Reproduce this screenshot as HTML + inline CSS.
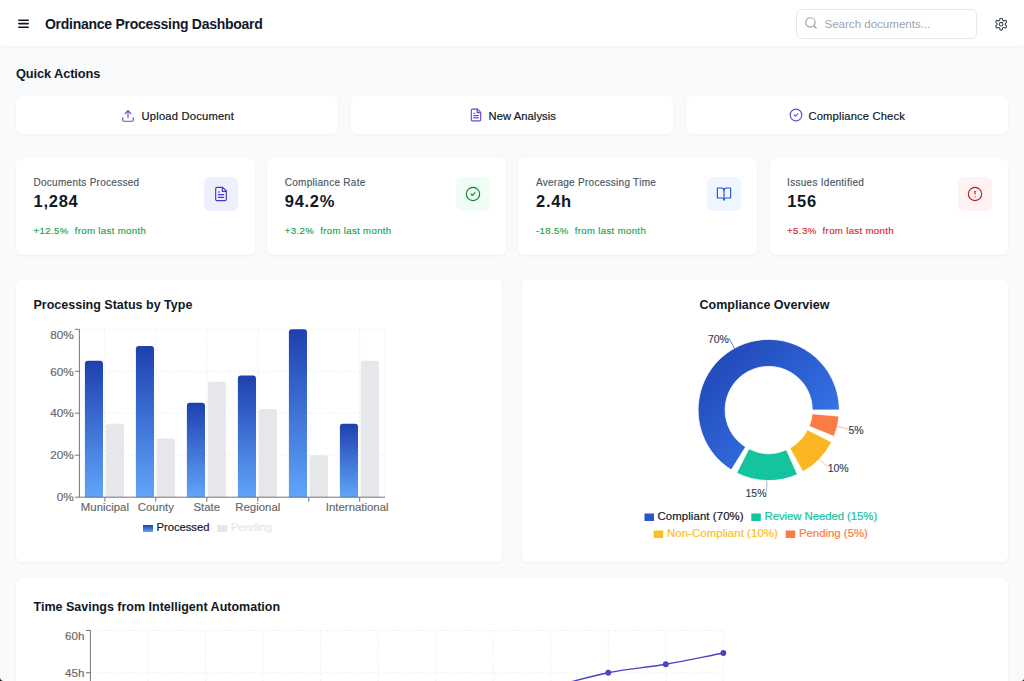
<!DOCTYPE html>
<html>
<head>
<meta charset="utf-8">
<style>
* { box-sizing: border-box; margin: 0; padding: 0; }
html, body { width: 1024px; height: 681px; overflow: hidden; }
body { background: #f9fafb; font-family: "Liberation Sans", sans-serif; color: #111827; position: relative; }
.abs { position: absolute; }
.t { position: absolute; white-space: nowrap; line-height: 1; }
.header { position: absolute; left: 0; top: 0; width: 1024px; height: 46px; background: #fff; box-shadow: 0 1px 2px rgba(0,0,0,0.05); }
.card { position: absolute; background: #fff; border-radius: 6px; box-shadow: 0 1px 3px rgba(0,0,0,0.05), 0 0 1px rgba(0,0,0,0.03); }
svg { position: absolute; overflow: visible; }
.med { -webkit-text-stroke: 0.2px currentColor; }
.ic { fill: none; stroke-width: 2; stroke-linecap: round; stroke-linejoin: round; }
</style>
</head>
<body>
<div class="header">
  <svg style="left:0;top:0" width="40" height="40"><g stroke="#111827" stroke-width="1.6" stroke-linecap="round"><line x1="18.8" x2="28.2" y1="20.2" y2="20.2"/><line x1="18.8" x2="28.2" y1="23.6" y2="23.6"/><line x1="18.8" x2="28.2" y1="27.3" y2="27.3"/></g></svg>
  <div class="t" style="left:45px;top:16.5px;font-size:14px;font-weight:700;letter-spacing:-0.27px;color:#111827">Ordinance Processing Dashboard</div>
  <div class="abs" style="left:795.5px;top:9px;width:181px;height:29.5px;border:1px solid #e7e8eb;border-radius:6px;background:#fff"></div>
  <svg class="ic" style="left:804.2px;top:16.2px;stroke-width:1.9" width="14" height="14" viewBox="0 0 24 24" stroke="#9a9ea6"><circle cx="11" cy="11" r="8"/><path d="m21 21-4.3-4.3"/></svg>
  <div class="t" style="left:824.5px;top:18.2px;font-size:11.6px;letter-spacing:-0.03px;color:#9ca3af">Search documents...</div>
  <svg class="ic" style="left:994px;top:16.8px;stroke-width:1.8" width="14.3" height="14.3" viewBox="0 0 24 24" stroke="#374151"><path d="M12.22 2h-.44a2 2 0 0 0-2 2v.18a2 2 0 0 1-1 1.73l-.43.25a2 2 0 0 1-2 0l-.15-.08a2 2 0 0 0-2.73.73l-.22.38a2 2 0 0 0 .73 2.73l.15.1a2 2 0 0 1 1 1.72v.51a2 2 0 0 1-1 1.74l-.15.09a2 2 0 0 0-.73 2.73l.22.38a2 2 0 0 0 2.730.73l.15-.08a2 2 0 0 1 2 0l.43.25a2 2 0 0 1 1 1.73V20a2 2 0 0 0 2 2h.44a2 2 0 0 0 2-2v-.18a2 2 0 0 1 1-1.73l.43-.25a2 2 0 0 1 2 0l.15.08a2 2 0 0 0 2.73-.73l.22-.39a2 2 0 0 0-.73-2.73l-.15-.08a2 2 0 0 1-1-1.74v-.5a2 2 0 0 1 1-1.74l.15-.09a2 2 0 0 0 .73-2.73l-.22-.38a2 2 0 0 0-2.73-.73l-.15.08a2 2 0 0 1-2 0l-.43-.25a2 2 0 0 1-1-1.73V4a2 2 0 0 0-2-2z"/><circle cx="12" cy="12" r="3"/></svg>
</div>

<!-- Quick actions -->
<div class="t" style="left:16px;top:67.7px;font-size:12.8px;font-weight:700;letter-spacing:-0.1px">Quick Actions</div>

<div class="card" style="left:16px;top:96px;width:322px;height:38px"></div>
<div class="card" style="left:351px;top:96px;width:322px;height:38px"></div>
<div class="card" style="left:686px;top:96px;width:322px;height:38px"></div>

<svg class="ic" style="left:121.1px;top:108.6px" width="14" height="14" viewBox="0 0 24 24" stroke="#5b4fcf"><path d="M21 15v4a2 2 0 0 1-2 2H5a2 2 0 0 1-2-2v-4"/><polyline points="17 8 12 3 7 8"/><line x1="12" x2="12" y1="3" y2="15"/></svg>
<div class="t med" style="left:141.5px;top:110.7px;font-size:11.2px;letter-spacing:0.2px;color:#111827">Upload Document</div>

<svg class="ic" style="left:468.5px;top:108.3px" width="14" height="14" viewBox="0 0 24 24" stroke="#5b4fcf"><path d="M14.5 2H6a2 2 0 0 0-2 2v16a2 2 0 0 0 2 2h12a2 2 0 0 0 2-2V7.5L14.5 2z"/><polyline points="14 2 14 8 20 8"/><line x1="16" x2="8" y1="13" y2="13"/><line x1="16" x2="8" y1="17" y2="17"/><line x1="10" x2="8" y1="9" y2="9"/></svg>
<div class="t med" style="left:488.5px;top:110.7px;font-size:11.2px;letter-spacing:0.08px;color:#111827">New Analysis</div>

<svg class="ic" style="left:788.7px;top:108.3px" width="14" height="14" viewBox="0 0 24 24" stroke="#5b4fcf"><circle cx="12" cy="12" r="10"/><path d="m9 12 2 2 4-4"/></svg>
<div class="t med" style="left:808.5px;top:110.7px;font-size:11.2px;letter-spacing:0.16px;color:#111827">Compliance Check</div>

<!-- Stats -->
<div class="card" style="left:16px;top:158px;width:238.8px;height:97px"></div>
<div class="t" style="left:33.5px;top:178px;font-size:10px;letter-spacing:0.28px;color:#4b5563;-webkit-text-stroke:0.15px #4b5563">Documents Processed</div>
<div class="t" style="left:33.6px;top:193px;font-size:16.5px;font-weight:700;letter-spacing:0.7px;color:#111827">1,284</div>
<div class="t" style="left:33.5px;top:226px;font-size:9.6px;letter-spacing:0.4px;color:#16a34a;-webkit-text-stroke:0.15px #16a34a">+12.5%<span style="margin-left:6px;letter-spacing:0.35px">from last month</span></div>
<div class="abs" style="left:204.4px;top:176.5px;width:34px;height:34px;border-radius:6px;background:#eef0fe"></div>
<svg class="ic" style="left:213.4px;top:185.5px;stroke-width:1.7" width="16" height="16" viewBox="0 0 24 24" stroke="#4338ca"><path d="M14.5 2H6a2 2 0 0 0-2 2v16a2 2 0 0 0 2 2h12a2 2 0 0 0 2-2V7.5L14.5 2z"/><polyline points="14 2 14 8 20 8"/><line x1="16" x2="8" y1="13" y2="13"/><line x1="16" x2="8" y1="17" y2="17"/><line x1="10" x2="8" y1="9" y2="9"/></svg>
<div class="card" style="left:267.2px;top:158px;width:238.8px;height:97px"></div>
<div class="t" style="left:284.7px;top:178px;font-size:10px;letter-spacing:0.28px;color:#4b5563;-webkit-text-stroke:0.15px #4b5563">Compliance Rate</div>
<div class="t" style="left:284.8px;top:193px;font-size:16.5px;font-weight:700;letter-spacing:0.7px;color:#111827">94.2%</div>
<div class="t" style="left:284.7px;top:226px;font-size:9.6px;letter-spacing:0.4px;color:#16a34a;-webkit-text-stroke:0.15px #16a34a">+3.2%<span style="margin-left:6px;letter-spacing:0.35px">from last month</span></div>
<div class="abs" style="left:455.6px;top:176.5px;width:34px;height:34px;border-radius:6px;background:#effdf4"></div>
<svg class="ic" style="left:464.6px;top:185.5px;stroke-width:1.7" width="16" height="16" viewBox="0 0 24 24" stroke="#15803d"><circle cx="12" cy="12" r="10"/><path d="m9 12 2 2 4-4"/></svg>
<div class="card" style="left:518.4px;top:158px;width:238.8px;height:97px"></div>
<div class="t" style="left:535.9px;top:178px;font-size:10px;letter-spacing:0.28px;color:#4b5563;-webkit-text-stroke:0.15px #4b5563">Average Processing Time</div>
<div class="t" style="left:536.0px;top:193px;font-size:16.5px;font-weight:700;letter-spacing:0.7px;color:#111827">2.4h</div>
<div class="t" style="left:535.9px;top:226px;font-size:9.6px;letter-spacing:0.4px;color:#16a34a;-webkit-text-stroke:0.15px #16a34a">-18.5%<span style="margin-left:6px;letter-spacing:0.35px">from last month</span></div>
<div class="abs" style="left:706.8px;top:176.5px;width:34px;height:34px;border-radius:6px;background:#eff6ff"></div>
<svg class="ic" style="left:715.8px;top:185.5px;stroke-width:1.7" width="16" height="16" viewBox="0 0 24 24" stroke="#1d4ed8"><path d="M12 7v14"/><path d="M3 18a1 1 0 0 1-1-1V4a1 1 0 0 1 1-1h5a4 4 0 0 1 4 4 4 4 0 0 1 4-4h5a1 1 0 0 1 1 1v13a1 1 0 0 1-1 1h-6a3 3 0 0 0-3 3 3 3 0 0 0-3-3z"/></svg>
<div class="card" style="left:769.6px;top:158px;width:238.8px;height:97px"></div>
<div class="t" style="left:787.1px;top:178px;font-size:10px;letter-spacing:0.28px;color:#4b5563;-webkit-text-stroke:0.15px #4b5563">Issues Identified</div>
<div class="t" style="left:787.2px;top:193px;font-size:16.5px;font-weight:700;letter-spacing:0.7px;color:#111827">156</div>
<div class="t" style="left:787.1px;top:226px;font-size:9.6px;letter-spacing:0.4px;color:#dc2626;-webkit-text-stroke:0.15px #dc2626">+5.3%<span style="margin-left:6px;letter-spacing:0.35px">from last month</span></div>
<div class="abs" style="left:958.0px;top:176.5px;width:34px;height:34px;border-radius:6px;background:#fef2f2"></div>
<svg class="ic" style="left:967.0px;top:185.5px;stroke-width:1.7" width="16" height="16" viewBox="0 0 24 24" stroke="#b91c1c"><circle cx="12" cy="12" r="10"/><line x1="12" x2="12" y1="8" y2="12"/><line x1="12" x2="12.01" y1="16" y2="16"/></svg>

<!-- Charts -->
<div class="card" style="left:16px;top:278.5px;width:486.4px;height:283px"></div>
<div class="card" style="left:521.6px;top:278.5px;width:486.4px;height:283px"></div>
<div class="card" style="left:16px;top:578px;width:992px;height:200px"></div>
<div class="t" style="left:33.5px;top:298.5px;font-size:12.5px;font-weight:700;color:#111827">Processing Status by Type</div>
<div class="t" style="left:699.5px;top:298.5px;font-size:12.5px;font-weight:700;color:#111827">Compliance Overview</div>
<div class="t" style="left:33.5px;top:600.5px;font-size:12.5px;font-weight:700;color:#111827">Time Savings from Intelligent Automation</div>
<svg style="left:0;top:0" width="1024" height="681" viewBox="0 0 1024 681" font-family="Liberation Sans, sans-serif">
<defs><linearGradient id="gb" x1="0" y1="0" x2="0" y2="1"><stop offset="0" stop-color="#1e40af"/><stop offset="1" stop-color="#60a5fa"/></linearGradient><linearGradient id="gd" x1="0" y1="0" x2="1" y2="1"><stop offset="0" stop-color="#1e40af"/><stop offset="1" stop-color="#3b82f6"/></linearGradient></defs>
<line x1="79.4" x2="385.2" y1="455.2" y2="455.2" stroke="#ececec" stroke-dasharray="2.4 2.4" stroke-width="0.8"/>
<line x1="79.4" x2="385.2" y1="413.2" y2="413.2" stroke="#ececec" stroke-dasharray="2.4 2.4" stroke-width="0.8"/>
<line x1="79.4" x2="385.2" y1="371.3" y2="371.3" stroke="#ececec" stroke-dasharray="2.4 2.4" stroke-width="0.8"/>
<line x1="79.4" x2="385.2" y1="329.3" y2="329.3" stroke="#ececec" stroke-dasharray="2.4 2.4" stroke-width="0.8"/>
<line x1="104.9" x2="104.9" y1="329.3" y2="497.2" stroke="#ececec" stroke-dasharray="2.4 2.4" stroke-width="0.8"/>
<line x1="155.8" x2="155.8" y1="329.3" y2="497.2" stroke="#ececec" stroke-dasharray="2.4 2.4" stroke-width="0.8"/>
<line x1="206.8" x2="206.8" y1="329.3" y2="497.2" stroke="#ececec" stroke-dasharray="2.4 2.4" stroke-width="0.8"/>
<line x1="257.8" x2="257.8" y1="329.3" y2="497.2" stroke="#ececec" stroke-dasharray="2.4 2.4" stroke-width="0.8"/>
<line x1="308.8" x2="308.8" y1="329.3" y2="497.2" stroke="#ececec" stroke-dasharray="2.4 2.4" stroke-width="0.8"/>
<line x1="359.7" x2="359.7" y1="329.3" y2="497.2" stroke="#ececec" stroke-dasharray="2.4 2.4" stroke-width="0.8"/>
<line x1="385.2" x2="385.2" y1="329.3" y2="497.2" stroke="#ececec" stroke-dasharray="2.4 2.4" stroke-width="0.8"/>
<path d="M84.90,497.20 V363.78 Q84.90,360.78 87.90,360.78 H100.00 Q103.00,360.78 103.00,363.78 V497.20 Z" fill="url(#gb)"/>
<path d="M105.80,497.20 V426.74 Q105.80,423.74 108.80,423.74 H121.00 Q124.00,423.74 124.00,426.74 V497.20 Z" fill="#e5e7eb"/>
<path d="M135.90,497.20 V349.09 Q135.90,346.09 138.90,346.09 H151.00 Q154.00,346.09 154.00,349.09 V497.20 Z" fill="url(#gb)"/>
<path d="M156.80,497.20 V441.44 Q156.80,438.44 159.80,438.44 H172.00 Q175.00,438.44 175.00,441.44 V497.20 Z" fill="#e5e7eb"/>
<path d="M186.90,497.20 V405.76 Q186.90,402.76 189.90,402.76 H202.00 Q205.00,402.76 205.00,405.76 V497.20 Z" fill="url(#gb)"/>
<path d="M207.80,497.20 V384.77 Q207.80,381.77 210.80,381.77 H223.00 Q226.00,381.77 226.00,384.77 V497.20 Z" fill="#e5e7eb"/>
<path d="M237.90,497.20 V378.47 Q237.90,375.47 240.90,375.47 H253.00 Q256.00,375.47 256.00,378.47 V497.20 Z" fill="url(#gb)"/>
<path d="M258.80,497.20 V412.05 Q258.80,409.05 261.80,409.05 H274.00 Q277.00,409.05 277.00,412.05 V497.20 Z" fill="#e5e7eb"/>
<path d="M288.90,497.20 V332.30 Q288.90,329.30 291.90,329.30 H304.00 Q307.00,329.30 307.00,332.30 V497.20 Z" fill="url(#gb)"/>
<path d="M309.80,497.20 V458.23 Q309.80,455.23 312.80,455.23 H325.00 Q328.00,455.23 328.00,458.23 V497.20 Z" fill="#e5e7eb"/>
<path d="M339.90,497.20 V426.74 Q339.90,423.74 342.90,423.74 H355.00 Q358.00,423.74 358.00,426.74 V497.20 Z" fill="url(#gb)"/>
<path d="M360.80,497.20 V363.78 Q360.80,360.78 363.80,360.78 H376.00 Q379.00,360.78 379.00,363.78 V497.20 Z" fill="#e5e7eb"/>
<line x1="79.4" x2="79.4" y1="329.3" y2="497.2" stroke="#666" stroke-width="0.9"/>
<line x1="79.4" x2="385.2" y1="497.2" y2="497.2" stroke="#666" stroke-width="0.9"/>
<line x1="74.9" x2="79.4" y1="497.2" y2="497.2" stroke="#666" stroke-width="0.9"/>
<text x="73.8" y="501.4" text-anchor="end" font-size="11.8" fill="#666" stroke="#666" stroke-width="0.15">0%</text>
<line x1="74.9" x2="79.4" y1="455.2" y2="455.2" stroke="#666" stroke-width="0.9"/>
<text x="73.8" y="459.4" text-anchor="end" font-size="11.8" fill="#666" stroke="#666" stroke-width="0.15">20%</text>
<line x1="74.9" x2="79.4" y1="413.2" y2="413.2" stroke="#666" stroke-width="0.9"/>
<text x="73.8" y="417.4" text-anchor="end" font-size="11.8" fill="#666" stroke="#666" stroke-width="0.15">40%</text>
<line x1="74.9" x2="79.4" y1="371.3" y2="371.3" stroke="#666" stroke-width="0.9"/>
<text x="73.8" y="375.5" text-anchor="end" font-size="11.8" fill="#666" stroke="#666" stroke-width="0.15">60%</text>
<line x1="74.9" x2="79.4" y1="329.3" y2="329.3" stroke="#666" stroke-width="0.9"/>
<text x="73.8" y="338.5" text-anchor="end" font-size="11.8" fill="#666" stroke="#666" stroke-width="0.15">80%</text>
<line x1="104.9" x2="104.9" y1="497.2" y2="501.7" stroke="#666" stroke-width="0.9"/>
<text x="104.9" y="510.8" text-anchor="middle" font-size="11.4" fill="#666" stroke="#666" stroke-width="0.15">Municipal</text>
<line x1="155.8" x2="155.8" y1="497.2" y2="501.7" stroke="#666" stroke-width="0.9"/>
<text x="155.8" y="510.8" text-anchor="middle" font-size="11.4" fill="#666" stroke="#666" stroke-width="0.15">County</text>
<line x1="206.8" x2="206.8" y1="497.2" y2="501.7" stroke="#666" stroke-width="0.9"/>
<text x="206.8" y="510.8" text-anchor="middle" font-size="11.4" fill="#666" stroke="#666" stroke-width="0.15">State</text>
<line x1="257.8" x2="257.8" y1="497.2" y2="501.7" stroke="#666" stroke-width="0.9"/>
<text x="257.8" y="510.8" text-anchor="middle" font-size="11.4" fill="#666" stroke="#666" stroke-width="0.15">Regional</text>
<line x1="308.8" x2="308.8" y1="497.2" y2="501.7" stroke="#666" stroke-width="0.9"/>
<line x1="359.7" x2="359.7" y1="497.2" y2="501.7" stroke="#666" stroke-width="0.9"/>
<text x="357.2" y="510.8" text-anchor="middle" font-size="11.4" fill="#666" stroke="#666" stroke-width="0.15">International</text>
<rect x="143" y="525" width="10" height="7" fill="url(#gb)"/>
<text x="156.5" y="531" font-size="11.2" fill="#111827" stroke="#111827" stroke-width="0.2">Processed</text>
<rect x="217.3" y="525" width="10" height="7" fill="#e5e7eb"/>
<text x="231" y="531" font-size="11.2" fill="#e5e7eb" stroke="#e5e7eb" stroke-width="0.2">Pending</text>
<path d="M839.30,410.00 A70.6,70.6 0 1 0 731.29,469.87 L745.60,446.97 A43.6,43.6 0 1 1 812.30,410.00 Z" fill="url(#gd)" stroke="#fff" stroke-width="0.8"/>
<path d="M736.65,472.91 A70.6,70.6 0 0 0 797.42,474.50 L786.43,449.83 A43.6,43.6 0 0 1 748.91,448.85 Z" fill="#14c49c" stroke="#fff" stroke-width="0.8"/>
<path d="M802.93,471.75 A70.6,70.6 0 0 0 831.61,442.05 L807.55,429.79 A43.6,43.6 0 0 1 789.84,448.13 Z" fill="#fbb624" stroke="#fff" stroke-width="0.8"/>
<path d="M834.16,436.45 A70.6,70.6 0 0 0 839.03,416.15 L812.13,413.80 A43.6,43.6 0 0 1 809.13,426.33 Z" fill="#f97c45" stroke="#fff" stroke-width="0.8"/>
<line x1="734.47" y1="348.25" x2="728.95" y2="338.28" stroke="#3b5bd5" stroke-width="0.8"/>
<text x="728.95" y="342.88" text-anchor="end" font-size="10.5" fill="#374151" stroke="#374151" stroke-width="0.15">70%</text>
<line x1="766.85" y1="480.58" x2="766.55" y2="491.97" stroke="#9ca3af" stroke-width="0.8"/>
<text x="766.55" y="496.57" text-anchor="end" font-size="10.5" fill="#374151" stroke="#374151" stroke-width="0.15">15%</text>
<line x1="819.49" y1="459.04" x2="827.69" y2="466.96" stroke="#e9c46a" stroke-width="0.8"/>
<text x="827.69" y="471.56" text-anchor="start" font-size="10.5" fill="#374151" stroke="#374151" stroke-width="0.15">10%</text>
<line x1="837.35" y1="426.48" x2="848.43" y2="429.14" stroke="#f4a582" stroke-width="0.8"/>
<text x="848.43" y="433.74" text-anchor="start" font-size="10.5" fill="#374151" stroke="#374151" stroke-width="0.15">5%</text>
<rect x="644.5" y="513.5" width="9.5" height="7.5" fill="#2b56c9"/>
<text x="657.5" y="519.8" font-size="11.4" letter-spacing="0.09" fill="#111827" stroke="#111827" stroke-width="0.2">Compliant (70%)</text>
<rect x="751.3" y="513.5" width="9.5" height="7.5" fill="#14c49c"/>
<text x="764.5" y="519.8" font-size="11.4" letter-spacing="-0.07" fill="#14c49c" stroke="#14c49c" stroke-width="0.2">Review Needed (15%)</text>
<rect x="653.7" y="530.5" width="9.5" height="7.5" fill="#fbbf24"/>
<text x="667" y="536.7" font-size="11.4" letter-spacing="0.07" fill="#fbbf24" stroke="#fbbf24" stroke-width="0.2">Non-Compliant (10%)</text>
<rect x="785.7" y="530.5" width="9.5" height="7.5" fill="#f97c45"/>
<text x="798.9" y="536.7" font-size="11.4" fill="#f97c45" stroke="#f97c45" stroke-width="0.2">Pending (5%)</text>
<line x1="147.9" x2="147.9" y1="630.5" y2="681" stroke="#ececec" stroke-dasharray="2.4 2.4" stroke-width="0.8"/>
<line x1="205.5" x2="205.5" y1="630.5" y2="681" stroke="#ececec" stroke-dasharray="2.4 2.4" stroke-width="0.8"/>
<line x1="263.0" x2="263.0" y1="630.5" y2="681" stroke="#ececec" stroke-dasharray="2.4 2.4" stroke-width="0.8"/>
<line x1="320.6" x2="320.6" y1="630.5" y2="681" stroke="#ececec" stroke-dasharray="2.4 2.4" stroke-width="0.8"/>
<line x1="378.1" x2="378.1" y1="630.5" y2="681" stroke="#ececec" stroke-dasharray="2.4 2.4" stroke-width="0.8"/>
<line x1="435.6" x2="435.6" y1="630.5" y2="681" stroke="#ececec" stroke-dasharray="2.4 2.4" stroke-width="0.8"/>
<line x1="493.2" x2="493.2" y1="630.5" y2="681" stroke="#ececec" stroke-dasharray="2.4 2.4" stroke-width="0.8"/>
<line x1="550.7" x2="550.7" y1="630.5" y2="681" stroke="#ececec" stroke-dasharray="2.4 2.4" stroke-width="0.8"/>
<line x1="608.3" x2="608.3" y1="630.5" y2="681" stroke="#ececec" stroke-dasharray="2.4 2.4" stroke-width="0.8"/>
<line x1="665.8" x2="665.8" y1="630.5" y2="681" stroke="#ececec" stroke-dasharray="2.4 2.4" stroke-width="0.8"/>
<line x1="723.3" x2="723.3" y1="630.5" y2="681" stroke="#ececec" stroke-dasharray="2.4 2.4" stroke-width="0.8"/>
<line x1="90.4" x2="723.3" y1="630.5" y2="630.5" stroke="#ececec" stroke-dasharray="2.4 2.4" stroke-width="0.8"/>
<line x1="90.4" x2="723.3" y1="672.7" y2="672.7" stroke="#ececec" stroke-dasharray="2.4 2.4" stroke-width="0.8"/>
<line x1="90.4" x2="90.4" y1="630.5" y2="681" stroke="#666" stroke-width="0.9"/>
<line x1="85.9" x2="90.4" y1="630.5" y2="630.5" stroke="#666" stroke-width="0.9"/>
<text x="84.3" y="639.6" text-anchor="end" font-size="11.5" fill="#666" stroke="#666" stroke-width="0.15">60h</text>
<line x1="85.9" x2="90.4" y1="672.7" y2="672.7" stroke="#666" stroke-width="0.9"/>
<text x="84.3" y="676.8" text-anchor="end" font-size="11.5" fill="#666" stroke="#666" stroke-width="0.15">45h</text>
<path d="M90.40,765.54 C109.58,762.73 128.76,759.91 147.94,757.10 C167.12,754.29 186.30,751.94 205.48,748.66 C224.66,745.38 243.84,740.69 263.02,737.41 C282.20,734.12 301.38,731.78 320.56,728.97 C339.74,726.15 358.92,723.81 378.10,720.53 C397.28,717.24 416.46,713.02 435.64,709.27 C454.82,705.52 474.00,701.77 493.18,698.02 C512.36,694.27 531.54,690.99 550.72,686.77 C569.90,682.55 589.08,676.45 608.26,672.70 C627.44,668.95 646.62,667.54 665.80,664.26 C684.98,660.98 704.16,656.76 723.34,653.01" fill="none" stroke="#4b44c2" stroke-width="1.4"/>
<circle cx="550.72" cy="686.77" r="2.9" fill="#4b44c2"/>
<circle cx="608.26" cy="672.70" r="2.9" fill="#4b44c2"/>
<circle cx="665.80" cy="664.26" r="2.9" fill="#4b44c2"/>
<circle cx="723.34" cy="653.01" r="2.9" fill="#4b44c2"/>
<path d="M0,677.3 A3.7,3.7 0 0 0 3.7,681 L0,681 Z" fill="#111"/>
<path d="M1024,678 A3,3 0 0 1 1021,681 L1024,681 Z" fill="#222"/>
</svg>
</body>
</html>
